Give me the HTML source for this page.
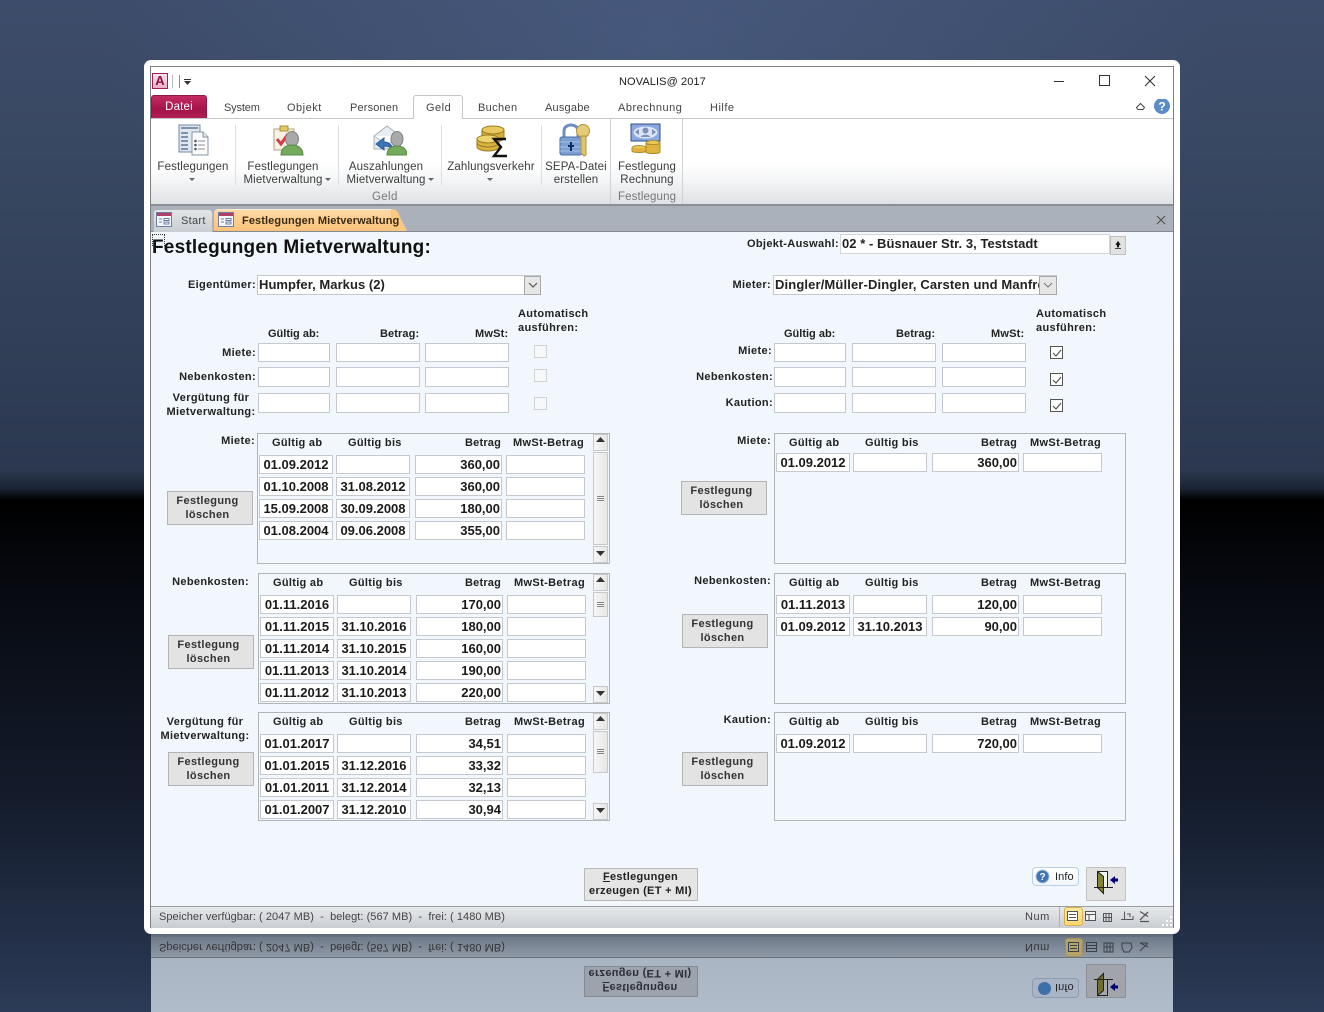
<!DOCTYPE html>
<html><head><meta charset="utf-8"><style>
*{box-sizing:border-box}
html,body{margin:0;padding:0;width:1324px;height:1012px;overflow:hidden;background:#000}
#bg{position:absolute;left:0;top:0;width:1324px;height:1012px;background:radial-gradient(ellipse 560px 330px at 660px 40px,rgba(88,112,160,.35),rgba(88,112,160,0)),linear-gradient(#3d4c6a 0,#37465f 200px,#2b3850 470px,#1c2536 488px,#000 500px,#05070c 560px,#141c2c 800px,#2c3b57 1012px)}
div,span{position:absolute;font-family:"Liberation Sans",sans-serif;white-space:nowrap}
#w{left:144px;top:60px;width:1036px;height:874px;background:#fff;border-radius:7px}
#in{left:150px;top:66px;width:1024px;height:862px;border:1px solid #7f7f7f;background:#fff}
.a{left:0;top:0}
.r{font:11.5px/13px "Liberation Sans",sans-serif;color:#3c3c3c;letter-spacing:.12px;text-align:center}
.m{font:11px "Liberation Sans",sans-serif;color:#444;letter-spacing:.55px}
.s{letter-spacing:.05px}
.l{font:bold 11px "Liberation Sans",sans-serif;color:#222;letter-spacing:.35px;line-height:14px;margin-top:1px}
.lr{text-align:right}
.lc{text-align:center}
.b{background:#fff;border:1px solid #c4c9cf}
.c{font:bold 13px/18px "Liberation Sans",sans-serif;color:#222;padding-left:1px;letter-spacing:.05px}
.v{background:#fff;border:1px solid #c4c9cf;font:bold 13px/17px "Liberation Sans",sans-serif;color:#1a1a1a;text-align:center;height:19px;padding-top:0}
.vr{text-align:right;padding-right:1px}
.box{border:1px solid #b0b5ba;background:#f1f7fd}
.btn{background:#e3e3e3;border:1px solid #b4b4b4;font:bold 11px/14px "Liberation Sans",sans-serif;color:#333;text-align:center;letter-spacing:.35px;width:86px;height:34px;padding-top:2px;padding-right:5px}
.sb{background:linear-gradient(90deg,#f6f6f6,#e6e6e6);border:1px solid #c8c8c8}
.cb{width:13px;height:13px;background:#fff;border:1px solid #555}
.cd{width:13px;height:13px;background:#f6f8f9;border:1px solid #cfd3d6}
.sep{width:1px;background:#dcdfe2}
</style></head><body>
<div id="bg"></div>

<!-- reflection -->
<div style="left:151px;top:934px;width:1022px;height:78px;background:linear-gradient(#5d6778 0,#aab5c3 24px,#b1bccb 78px);overflow:hidden">
<div style="left:0;top:3px;width:1022px;height:21px;background:linear-gradient(#6f7a8a,#8f99a6);border-bottom:1px solid #6c7480"></div>
<div class="m s" style="left:8px;top:7px;color:#333;transform:scaleY(-1)">Speicher verfügbar: ( 2047 MB)&nbsp; -&nbsp; belegt: (567 MB)&nbsp; -&nbsp; frei: ( 1480 MB)</div>
<div class="m" style="left:874px;top:7px;color:#333;transform:scaleY(-1)">Num</div>
<div style="left:914px;top:4px;width:18px;height:19px;background:#b4a36c;border:1px solid #a08f58;border-radius:3px"></div>
<svg class="a" style="position:absolute;left:916px;top:7px" width="90" height="14" fill="none" stroke="#39404a"><rect x="1.5" y="1.5" width="10" height="9"/><path d="M3 4.500h7M3 7.500h7"/><rect x="19.500" y="1.500" width="10" height="9"/><path d="M20 4.500h9M20 7.500h9"/><path d="M37 2h9v9h-9zM40 2v9M43 2v9M37 6h9"/><path d="M55 2h9l1 5-3 4h-5l-2-4z"/><path d="M73 2l8 4M73 10l8-8M73 2h7"/></svg>
<div style="left:433px;top:32px;width:114px;height:31px;background:#9da3ac;border:1px solid #858b94;font:bold 11px/14px 'Liberation Sans',sans-serif;color:#2a2f36;text-align:center;letter-spacing:.3px;transform:scaleY(-1);padding-top:2px;padding-right:2px"><u>F</u>estlegungen<br>erzeugen (ET + MI)</div>
<div style="left:881px;top:44px;width:47px;height:20px;background:#a9b5c6;border:1px solid #8f9cb0;border-radius:4px"></div>
<div class="m" style="left:904px;top:47px;color:#222;letter-spacing:.1px;transform:scaleY(-1)">Info</div>
<div style="left:887px;top:48px;width:13px;height:13px;border-radius:50%;background:#3f6fa8"></div>
<div style="left:935px;top:30px;width:40px;height:34px;background:#a1a5ab;border:1px solid #8d9197"></div>
<svg style="position:absolute;left:942px;top:36px" width="28" height="28"><g transform="translate(0,27) scale(1,-1)"><path d="M4.500 1.500h10v16h-10z" fill="#a5a5ac" stroke="#222"/><path d="M4.500 1.500l6 5v17l-6-6z" fill="#6f6f2b" stroke="#222"/><path d="M1 17.500h19" stroke="#222"/><path d="M17 10l5-4v2.500h3v3h-3V14z" fill="#00006e"/></g></svg>
</div>

<div id="w"></div>
<div id="in"></div>

<!-- quick access -->
<div style="left:152px;top:73px;width:16px;height:16px;background:linear-gradient(#fbe4ee,#e9afc6);border:1px solid #a0204f;font:bold 13px/14px 'Liberation Sans',sans-serif;color:#8c1241;text-align:center">A</div>
<div style="left:172px;top:75px;width:1px;height:13px;background:#bbb"></div>
<div style="left:179px;top:75px;width:1px;height:13px;background:#888"></div>
<div style="left:184px;top:79px;width:7px;height:1px;background:#333"></div>
<svg style="position:absolute;left:184px;top:81px" width="8" height="5"><path d="M0 0h7l-3.500 4z" fill="#333"/></svg>
<div style="left:619px;top:75px;font:11px 'Liberation Sans',sans-serif;color:#1a1a1a;letter-spacing:.1px;line-height:14px">NOVALIS@ 2017</div>
<svg style="position:absolute;left:1050px;top:72px" width="112" height="18" fill="none" stroke="#333" stroke-width="1"><path d="M4 9.500h10"/><rect x="49.500" y="3.500" width="10" height="10"/><path d="M95 4l10 10M105 4l-10 10" stroke-width="1.100"/></svg>

<!-- tabs -->
<div style="left:151px;top:95px;width:56px;height:24px;background:linear-gradient(#c42a63,#a5134b 60%,#b01e55);border-radius:3px 3px 0 0;border:1px solid #8f1743;color:#fff;font:11.5px/23px 'Liberation Sans',sans-serif;text-align:center;letter-spacing:.2px">Datei</div>
<div style="left:151px;top:118px;width:1022px;height:1px;background:#c3c6ca"></div>
<div style="left:413px;top:95px;width:50px;height:25px;background:#fff;border:1px solid #c2c6ca;border-bottom:0;border-radius:3px 3px 0 0"></div>
<div class="m" style="left:224px;top:102px;letter-spacing:-.15px">System</div>
<div class="m" style="left:287px;top:102px;letter-spacing:.5px">Objekt</div>
<div class="m" style="left:350px;top:102px;letter-spacing:.15px">Personen</div>
<div class="m" style="left:426px;top:102px;letter-spacing:.5px">Geld</div>
<div class="m" style="left:478px;top:102px;letter-spacing:.35px">Buchen</div>
<div class="m" style="left:545px;top:102px;letter-spacing:.2px">Ausgabe</div>
<div class="m" style="left:618px;top:102px;letter-spacing:.5px">Abrechnung</div>
<div class="m" style="left:710px;top:102px;letter-spacing:.5px">Hilfe</div>
<svg style="position:absolute;left:1135px;top:99px" width="36" height="16"><path d="M1.500 8.500l4-4 4 4-1.500 2h-5z" fill="none" stroke="#444"/><circle cx="27" cy="7" r="8" fill="#5a8cc6"/><text x="27" y="11.500" font-family="Liberation Sans" font-weight="bold" font-size="12" fill="#fff" text-anchor="middle">?</text></svg>

<!-- ribbon -->
<div style="left:151px;top:119px;width:1022px;height:86px;background:linear-gradient(#fff 0,#fff 45px,#f5f6f7 60px,#dfe1e4 86px)"></div>
<div style="left:151px;top:204px;width:1022px;height:2px;background:#8b8e92"></div>
<div class="sep" style="left:235px;top:125px;height:60px"></div>
<div class="sep" style="left:338px;top:125px;height:60px"></div>
<div class="sep" style="left:441px;top:125px;height:60px"></div>
<div class="sep" style="left:541px;top:125px;height:60px"></div>
<div style="left:610px;top:119px;width:1px;height:85px;background:#cfd2d6"></div>
<div style="left:682px;top:119px;width:1px;height:85px;background:#cfd2d6"></div>

<!-- ribbon icons -->
<svg style="position:absolute;left:178px;top:124px" width="32" height="32"><rect x="1" y="1" width="21" height="27" fill="#dfe6ef" stroke="#7688a0"/><path d="M3 4h17M3 9h7M3 13h7M3 17h7M3 21h7M3 25h7" stroke="#7f93ad" stroke-width="2"/><path d="M14 8h11l5 5v18H14z" fill="#fbfbfb" stroke="#8a95a3"/><path d="M25 8v5h5" fill="#e5e7ea" stroke="#8a95a3"/><path d="M20 17h7M20 21h7M20 25h7" stroke="#89929c"/><circle cx="17.500" cy="17" r="1.300" fill="#556"/><circle cx="17.500" cy="21" r="1.300" fill="#556"/><circle cx="17.500" cy="25" r="1.300" fill="#556"/></svg>
<svg style="position:absolute;left:272px;top:124px" width="32" height="32"><rect x="2" y="5" width="20" height="21" fill="#f6f3e6" stroke="#a9a37f"/><rect x="8" y="2" width="8" height="5" fill="#e5c766" stroke="#a8903e"/><path d="M5 15l4 5 7-10" fill="none" stroke="#d33e45" stroke-width="3"/><ellipse cx="20" cy="15" rx="6.500" ry="7.500" fill="#a9a9a9" stroke="#808080"/><path d="M9 31c0-7 5-10 11-10s11 3 11 10z" fill="#74aa5c" stroke="#5a8a45"/></svg>
<svg style="position:absolute;left:373px;top:124px" width="34" height="32"><path d="M1 12L14 2l13 10v13H1z" fill="#e8edf3" stroke="#a7b0ba"/><path d="M1 12l13 9 13-9" fill="#fff" stroke="#b8c0c8"/><path d="M3 20l8-6v4c4 0 8 2 9 8-2-3-5-4-9-4v4z" fill="#3c74b8" stroke="#2c5a95"/><ellipse cx="24" cy="15" rx="6" ry="7.500" fill="#a9a9a9" stroke="#808080"/><path d="M14 31c0-6 4-9 10-9s10 3 10 9z" fill="#74aa5c" stroke="#5a8a45"/></svg>
<svg style="position:absolute;left:476px;top:124px" width="32" height="34"><ellipse cx="17" cy="6" rx="11" ry="4" fill="#e9c95e" stroke="#9c7d22"/><path d="M6 6v8c0 2 5 4 11 4s11-2 11-4V6c0 2-5 4-11 4S6 8 6 6z" fill="#d6ac3a" stroke="#9c7d22"/><ellipse cx="12" cy="15" rx="11" ry="4" fill="#efd36c" stroke="#9c7d22"/><path d="M1 15v8c0 2 5 4 11 4s11-2 11-4v-8c0 2-5 4-11 4S1 17 1 15z" fill="#d9b23f" stroke="#9c7d22"/><path d="M1 19c0 2 5 4 11 4s11-2 11-4" fill="none" stroke="#9c7d22"/><path d="M30 15H18l7 8-7 9h13" fill="none" stroke="#111" stroke-width="2.400"/></svg>
<svg style="position:absolute;left:559px;top:123px" width="32" height="34"><path d="M5 14V8c0-8 14-8 14 0v6" fill="none" stroke="#6d8fc0" stroke-width="3"/><rect x="1" y="14" width="22" height="18" rx="2" fill="#7c9fd4" stroke="#4a6ca3"/><path d="M1 19h22M1 24h22M1 28h22" stroke="#a5c0e4"/><path d="M12 19v9M9 23h6" stroke="#0d2a66" stroke-width="2"/><circle cx="24" cy="8" r="6.500" fill="#e6cc79" stroke="#b19341"/><path d="M22 13h5v19l-2 1-3-3z" fill="#e0c468" stroke="#b19341"/></svg>
<svg style="position:absolute;left:630px;top:123px" width="32" height="32"><rect x="1" y="1" width="29" height="17" fill="#8aa9e0" stroke="#31507f"/><ellipse cx="15.500" cy="9.500" rx="12" ry="6" fill="#dbe5f6"/><path d="M5 9l4-3v6zM26 9l-4-3v6z" fill="#7a90b5"/><circle cx="15.500" cy="7.500" r="3" fill="#7a90b5"/><path d="M11 14c0-3 9-3 9 0z" fill="#7a90b5"/><ellipse cx="23" cy="20" rx="7" ry="2.500" fill="#eccb5d" stroke="#b18b2b"/><path d="M16 20v9c0 2 14 2 14 0v-9c0 2-14 2-14 0z" fill="#dfb441" stroke="#b18b2b"/><ellipse cx="9" cy="25" rx="7" ry="2.500" fill="#eccb5d" stroke="#b18b2b"/><path d="M2 25v3c0 2 14 2 14 0v-3" fill="#dfb441" stroke="#b18b2b"/></svg>

<!-- ribbon text -->
<div class="r" style="left:151px;width:84px;top:161px">Festlegungen</div>
<div class="r" style="left:238px;width:96px;top:161px;padding-right:6px">Festlegungen<br><span style="position:static">Mietverwaltung</span></div>
<div class="r" style="left:341px;width:96px;top:161px;padding-right:6px">Auszahlungen<br><span style="position:static">Mietverwaltung</span></div>
<div class="r" style="left:443px;width:96px;top:161px">Zahlungsverkehr</div>
<div class="r" style="left:544px;width:64px;top:161px">SEPA-Datei<br><span style="position:static">erstellen</span></div>
<div class="r" style="left:612px;width:70px;top:161px">Festlegung<br><span style="position:static">Rechnung</span></div>
<div class="r" style="left:372px;top:191px;color:#777;letter-spacing:.35px">Geld</div>
<div class="r" style="left:618px;top:191px;color:#777;letter-spacing:.12px">Festlegung</div>
<svg style="position:absolute;left:0;top:0" width="700" height="190"><path d="M189 178h6l-3 3zM325 178h6l-3 3zM428 178h6l-3 3zM487 178h6l-3 3z" fill="#666"/></svg>

<!-- doc tabs -->
<div style="left:151px;top:206px;width:1022px;height:26px;background:#aab1ba;border-bottom:1px solid #858a90"></div>
<div style="left:153px;top:209px;width:60px;height:23px;background:linear-gradient(#e3e6e9,#c9ced3);border:1px solid #aeb3b8;border-bottom:0;border-radius:4px 4px 0 0"></div>
<div style="left:214px;top:209px;width:178px;height:22px;background:linear-gradient(#fdd9a5,#fbc27a);border-radius:4px 0 0 0;border-top:1px solid #f7ecd8"></div>
<svg style="position:absolute;left:391px;top:209px" width="20" height="22"><path d="M0 0C6 0 7 3 9 8L16 22H0z" fill="#fbc881"/></svg>
<svg style="position:absolute;left:156px;top:212px" width="80" height="16" fill="#f6f8fb" stroke="#6d7ea8"><rect x=".5" y=".5" width="15" height="14"/><path d="M1 1h14v3H1z" fill="#b04066" stroke="none"/><path d="M3 7h3M3 10h3M8 6.500h5v2H8zM8 10h5v2H8z"/><rect x="62.500" y=".5" width="15" height="14"/><path d="M63 1h14v3H63z" fill="#b04066" stroke="none"/><path d="M65 7h3M65 10h3M70 6.500h5v2h-5zM70 10h5v2h-5z"/></svg>
<div class="m" style="left:181px;top:215px;color:#444;letter-spacing:.3px">Start</div>
<div style="left:242px;top:215px;font:bold 11px 'Liberation Sans',sans-serif;color:#3a2a10;letter-spacing:.1px">Festlegungen Mietverwaltung</div>
<svg style="position:absolute;left:1156px;top:215px" width="10" height="10"><path d="M1 1l8 8M9 1l-8 8" stroke="#555" stroke-width="1.200"/></svg>

<!-- form -->
<div style="left:151px;top:232px;width:1022px;height:674px;background:#f1f7fd"></div>
<div style="left:152px;top:234px;width:13px;height:12px;border:1px dotted #333;border-bottom:0"></div>
<div style="left:152px;top:237px;font:bold 19px 'Liberation Sans',sans-serif;color:#111;letter-spacing:.2px">Festlegungen Mietverwaltung:</div>

<div class="l lr" style="left:701px;width:138px;top:236px">Objekt-Auswahl:</div>
<div class="b c" style="left:840px;top:234px;width:270px;height:20px;border-color:#d0d5da">02 * - Büsnauer Str. 3, Teststadt</div>
<div style="left:1110px;top:236px;width:16px;height:19px;background:#e2e2e2;border:1px solid #c0c0c0"></div>
<svg style="position:absolute;left:1115px;top:241px" width="6" height="9"><path d="M1 3.500h4L3 .5zM2.300 3h1.400v3H2.300zM0 7.500h6" fill="#111" stroke="#111" stroke-width=".7"/></svg>

<div class="l lr" style="left:160px;width:96px;top:277px">Eigentümer:</div>
<div class="b c" style="left:257px;top:275px;width:284px;height:20px">Humpfer, Markus (2)</div>
<div style="left:524px;top:276px;width:17px;height:19px;background:#e6e6e6;border:1px solid #a8a8a8"></div>
<svg style="position:absolute;left:528px;top:282px" width="10" height="7"><path d="M1 1l4 4 4-4" fill="none" stroke="#555" stroke-width="1.200"/></svg>

<div class="l lr" style="left:680px;width:91px;top:277px">Mieter:</div>
<div class="b c" style="left:773px;top:275px;width:284px;height:20px;overflow:hidden;letter-spacing:.13px">Dingler/Müller-Dingler, Carsten und Manfred</div>
<div style="left:1039px;top:276px;width:18px;height:19px;background:#e6e6e6;border:1px solid #a8a8a8"></div>
<svg style="position:absolute;left:1043px;top:282px" width="10" height="7"><path d="M1 1l4 4 4-4" fill="none" stroke="#777" stroke-width="1"/></svg>

<!-- upper left -->
<div class="l" style="left:518px;top:306px">Automatisch<br>ausführen:</div>
<div class="l" style="left:268px;top:326px;letter-spacing:0">Gültig ab:</div>
<div class="l" style="left:380px;top:326px;letter-spacing:.1px">Betrag:</div>
<div class="l" style="left:475px;top:326px;letter-spacing:.2px">MwSt:</div>
<div class="l lr" style="left:160px;width:96px;top:345px">Miete:</div>
<div class="l lr" style="left:160px;width:96px;top:369px">Nebenkosten:</div>
<div class="l lc" style="left:163px;width:96px;top:390px">Vergütung für<br>Mietverwaltung:</div>
<div class="b" style="left:258px;top:343px;width:72px;height:19px"></div><div class="b" style="left:336px;top:343px;width:84px;height:19px"></div><div class="b" style="left:425px;top:343px;width:84px;height:19px"></div>
<div class="b" style="left:258px;top:367px;width:72px;height:20px"></div><div class="b" style="left:336px;top:367px;width:84px;height:20px"></div><div class="b" style="left:425px;top:367px;width:84px;height:20px"></div>
<div class="b" style="left:258px;top:393px;width:72px;height:20px"></div><div class="b" style="left:336px;top:393px;width:84px;height:20px"></div><div class="b" style="left:425px;top:393px;width:84px;height:20px"></div>
<div class="cd" style="left:534px;top:345px"></div><div class="cd" style="left:534px;top:369px"></div><div class="cd" style="left:534px;top:397px"></div>

<!-- upper right -->
<div class="l" style="left:1036px;top:306px">Automatisch<br>ausführen:</div>
<div class="l" style="left:784px;top:326px;letter-spacing:0">Gültig ab:</div>
<div class="l" style="left:896px;top:326px;letter-spacing:.1px">Betrag:</div>
<div class="l" style="left:991px;top:326px;letter-spacing:.2px">MwSt:</div>
<div class="l lr" style="left:676px;width:96px;top:343px">Miete:</div>
<div class="l lr" style="left:676px;width:97px;top:369px">Nebenkosten:</div>
<div class="l lr" style="left:676px;width:97px;top:395px">Kaution:</div>
<div class="b" style="left:774px;top:343px;width:72px;height:19px"></div><div class="b" style="left:852px;top:343px;width:84px;height:19px"></div><div class="b" style="left:942px;top:343px;width:84px;height:19px"></div>
<div class="b" style="left:774px;top:367px;width:72px;height:20px"></div><div class="b" style="left:852px;top:367px;width:84px;height:20px"></div><div class="b" style="left:942px;top:367px;width:84px;height:20px"></div>
<div class="b" style="left:774px;top:393px;width:72px;height:20px"></div><div class="b" style="left:852px;top:393px;width:84px;height:20px"></div><div class="b" style="left:942px;top:393px;width:84px;height:20px"></div>
<div class="cb" style="left:1050px;top:346px"></div><div class="cb" style="left:1050px;top:373px"></div><div class="cb" style="left:1050px;top:399px"></div>
<svg style="position:absolute;left:1050px;top:346px" width="14" height="67"><path d="M3 7l3 3 5-6M3 34l3 3 5-6M3 60l3 3 5-6" fill="none" stroke="#555" stroke-width="1.200"/></svg>

<!-- left list boxes -->
<div class="box" style="left:257px;top:433px;width:353px;height:131px"></div>
<div class="box" style="left:258px;top:573px;width:352px;height:131px"></div>
<div class="box" style="left:258px;top:712px;width:352px;height:109px"></div>
<!-- right boxes -->
<div class="box" style="left:774px;top:433px;width:352px;height:131px"></div>
<div class="box" style="left:774px;top:573px;width:352px;height:131px"></div>
<div class="box" style="left:774px;top:712px;width:352px;height:109px"></div>

<!-- headers -->
<div class="l" style="left:272px;top:435px;letter-spacing:.3px">Gültig ab</div><div class="l" style="left:348px;top:435px;letter-spacing:.3px">Gültig bis</div><div class="l" style="left:465px;top:435px;letter-spacing:.2px">Betrag</div><div class="l" style="left:513px;top:435px">MwSt-Betrag</div>
<div class="l" style="left:273px;top:575px;letter-spacing:.3px">Gültig ab</div><div class="l" style="left:349px;top:575px;letter-spacing:.3px">Gültig bis</div><div class="l" style="left:465px;top:575px;letter-spacing:.2px">Betrag</div><div class="l" style="left:514px;top:575px">MwSt-Betrag</div>
<div class="l" style="left:273px;top:714px;letter-spacing:.3px">Gültig ab</div><div class="l" style="left:349px;top:714px;letter-spacing:.3px">Gültig bis</div><div class="l" style="left:465px;top:714px;letter-spacing:.2px">Betrag</div><div class="l" style="left:514px;top:714px">MwSt-Betrag</div>
<div class="l" style="left:789px;top:435px;letter-spacing:.3px">Gültig ab</div><div class="l" style="left:865px;top:435px;letter-spacing:.3px">Gültig bis</div><div class="l" style="left:981px;top:435px;letter-spacing:.2px">Betrag</div><div class="l" style="left:1030px;top:435px">MwSt-Betrag</div>
<div class="l" style="left:789px;top:575px;letter-spacing:.3px">Gültig ab</div><div class="l" style="left:865px;top:575px;letter-spacing:.3px">Gültig bis</div><div class="l" style="left:981px;top:575px;letter-spacing:.2px">Betrag</div><div class="l" style="left:1030px;top:575px">MwSt-Betrag</div>
<div class="l" style="left:789px;top:714px;letter-spacing:.3px">Gültig ab</div><div class="l" style="left:865px;top:714px;letter-spacing:.3px">Gültig bis</div><div class="l" style="left:981px;top:714px;letter-spacing:.2px">Betrag</div><div class="l" style="left:1030px;top:714px">MwSt-Betrag</div>

<!-- side labels -->
<div class="l lr" style="left:160px;width:95px;top:433px">Miete:</div>
<div class="l lr" style="left:150px;width:99px;top:574px">Nebenkosten:</div>
<div class="l lc" style="left:157px;width:96px;top:714px">Vergütung für<br>Mietverwaltung:</div>
<div class="l lr" style="left:680px;width:91px;top:433px">Miete:</div>
<div class="l lr" style="left:680px;width:91px;top:573px">Nebenkosten:</div>
<div class="l lr" style="left:680px;width:91px;top:712px">Kaution:</div>

<!-- buttons -->
<div class="btn" style="left:167px;top:491px">Festlegung<br><span style="position:static">löschen</span></div>
<div class="btn" style="left:168px;top:635px">Festlegung<br><span style="position:static">löschen</span></div>
<div class="btn" style="left:168px;top:752px">Festlegung<br><span style="position:static">löschen</span></div>
<div class="btn" style="left:681px;top:481px">Festlegung<br><span style="position:static">löschen</span></div>
<div class="btn" style="left:682px;top:614px">Festlegung<br><span style="position:static">löschen</span></div>
<div class="btn" style="left:682px;top:752px">Festlegung<br><span style="position:static">löschen</span></div>

<!-- L1 rows -->
<div class="v" style="left:259px;top:455px;width:74px">01.09.2012</div><div class="v" style="left:336px;top:455px;width:74px"></div><div class="v vr" style="left:415px;top:455px;width:87px">360,00</div><div class="v" style="left:506px;top:455px;width:79px"></div>
<div class="v" style="left:259px;top:477px;width:74px">01.10.2008</div><div class="v" style="left:336px;top:477px;width:74px">31.08.2012</div><div class="v vr" style="left:415px;top:477px;width:87px">360,00</div><div class="v" style="left:506px;top:477px;width:79px"></div>
<div class="v" style="left:259px;top:499px;width:74px">15.09.2008</div><div class="v" style="left:336px;top:499px;width:74px">30.09.2008</div><div class="v vr" style="left:415px;top:499px;width:87px">180,00</div><div class="v" style="left:506px;top:499px;width:79px"></div>
<div class="v" style="left:259px;top:521px;width:74px">01.08.2004</div><div class="v" style="left:336px;top:521px;width:74px">09.06.2008</div><div class="v vr" style="left:415px;top:521px;width:87px">355,00</div><div class="v" style="left:506px;top:521px;width:79px"></div>
<!-- L2 rows -->
<div class="v" style="left:260px;top:595px;width:74px">01.11.2016</div><div class="v" style="left:337px;top:595px;width:74px"></div><div class="v vr" style="left:416px;top:595px;width:87px">170,00</div><div class="v" style="left:507px;top:595px;width:79px"></div>
<div class="v" style="left:260px;top:617px;width:74px">01.11.2015</div><div class="v" style="left:337px;top:617px;width:74px">31.10.2016</div><div class="v vr" style="left:416px;top:617px;width:87px">180,00</div><div class="v" style="left:507px;top:617px;width:79px"></div>
<div class="v" style="left:260px;top:639px;width:74px">01.11.2014</div><div class="v" style="left:337px;top:639px;width:74px">31.10.2015</div><div class="v vr" style="left:416px;top:639px;width:87px">160,00</div><div class="v" style="left:507px;top:639px;width:79px"></div>
<div class="v" style="left:260px;top:661px;width:74px">01.11.2013</div><div class="v" style="left:337px;top:661px;width:74px">31.10.2014</div><div class="v vr" style="left:416px;top:661px;width:87px">190,00</div><div class="v" style="left:507px;top:661px;width:79px"></div>
<div class="v" style="left:260px;top:683px;width:74px">01.11.2012</div><div class="v" style="left:337px;top:683px;width:74px">31.10.2013</div><div class="v vr" style="left:416px;top:683px;width:87px">220,00</div><div class="v" style="left:507px;top:683px;width:79px"></div>
<!-- L3 rows -->
<div class="v" style="left:260px;top:734px;width:74px">01.01.2017</div><div class="v" style="left:337px;top:734px;width:74px"></div><div class="v vr" style="left:416px;top:734px;width:87px">34,51</div><div class="v" style="left:507px;top:734px;width:79px"></div>
<div class="v" style="left:260px;top:756px;width:74px">01.01.2015</div><div class="v" style="left:337px;top:756px;width:74px">31.12.2016</div><div class="v vr" style="left:416px;top:756px;width:87px">33,32</div><div class="v" style="left:507px;top:756px;width:79px"></div>
<div class="v" style="left:260px;top:778px;width:74px">01.01.2011</div><div class="v" style="left:337px;top:778px;width:74px">31.12.2014</div><div class="v vr" style="left:416px;top:778px;width:87px">32,13</div><div class="v" style="left:507px;top:778px;width:79px"></div>
<div class="v" style="left:260px;top:800px;width:74px">01.01.2007</div><div class="v" style="left:337px;top:800px;width:74px">31.12.2010</div><div class="v vr" style="left:416px;top:800px;width:87px">30,94</div><div class="v" style="left:507px;top:800px;width:79px"></div>
<!-- R rows -->
<div class="v" style="left:776px;top:453px;width:74px">01.09.2012</div><div class="v" style="left:853px;top:453px;width:74px"></div><div class="v vr" style="left:932px;top:453px;width:87px">360,00</div><div class="v" style="left:1023px;top:453px;width:79px"></div>
<div class="v" style="left:776px;top:595px;width:74px">01.11.2013</div><div class="v" style="left:853px;top:595px;width:74px"></div><div class="v vr" style="left:932px;top:595px;width:87px">120,00</div><div class="v" style="left:1023px;top:595px;width:79px"></div>
<div class="v" style="left:776px;top:617px;width:74px">01.09.2012</div><div class="v" style="left:853px;top:617px;width:74px">31.10.2013</div><div class="v vr" style="left:932px;top:617px;width:87px">90,00</div><div class="v" style="left:1023px;top:617px;width:79px"></div>
<div class="v" style="left:776px;top:734px;width:74px">01.09.2012</div><div class="v" style="left:853px;top:734px;width:74px"></div><div class="v vr" style="left:932px;top:734px;width:87px">720,00</div><div class="v" style="left:1023px;top:734px;width:79px"></div>

<!-- scrollbars -->
<div class="sb" style="left:593px;top:434px;width:15px;height:17px"></div>
<div class="sb" style="left:593px;top:452px;width:15px;height:93px"></div>
<div class="sb" style="left:593px;top:546px;width:15px;height:17px"></div>
<div class="sb" style="left:593px;top:574px;width:15px;height:17px"></div>
<div class="sb" style="left:593px;top:592px;width:15px;height:25px"></div>
<div class="sb" style="left:593px;top:686px;width:15px;height:17px"></div>
<div class="sb" style="left:593px;top:713px;width:15px;height:17px"></div>
<div class="sb" style="left:593px;top:731px;width:15px;height:42px"></div>
<div class="sb" style="left:593px;top:803px;width:15px;height:17px"></div>
<svg style="position:absolute;left:593px;top:430px" width="16" height="395"><path d="M3 12l4.500-5 4.500 5zM3 121h9l-4.500 5zM3 152l4.500-5 4.500 5zM3 261h9l-4.500 5zM3 291l4.500-5 4.500 5zM3 378h9l-4.500 5z" fill="#333"/><path d="M4 66.500h7M4 68.500h7M4 70.500h7M4 172.500h7M4 174.500h7M4 176.500h7M4 319.500h7M4 321.500h7M4 323.500h7" stroke="#888"/></svg>

<!-- bottom buttons -->
<div style="left:584px;top:868px;width:114px;height:33px;background:#e5e5e5;border:1px solid #b8b8b8;font:bold 11px/14px 'Liberation Sans',sans-serif;color:#222;text-align:center;letter-spacing:.3px;padding-top:1px;padding-right:1px"><u>F</u>estlegungen<br>erzeugen (ET + MI)</div>
<div style="left:1032px;top:867px;width:47px;height:19px;background:linear-gradient(#fff,#f2f6fb);border:1px solid #bcd0e4;border-radius:4px"></div>
<svg style="position:absolute;left:1035px;top:869px" width="15" height="15"><circle cx="7.500" cy="7.500" r="6.500" fill="#3f74b5" stroke="#a8c4e2"/><text x="7.500" y="11" font-family="Liberation Sans" font-weight="bold" font-size="10" fill="#fff" text-anchor="middle">?</text></svg>
<div class="m" style="left:1055px;top:871px;color:#222;letter-spacing:.1px">Info</div>
<div style="left:1086px;top:867px;width:40px;height:34px;background:#e2e2e2;border:1px solid #c4c4c4"></div>
<svg style="position:absolute;left:1093px;top:870px" width="28" height="28"><path d="M4.500 1.500h10v16h-10z" fill="#f2f4f2" stroke="#222"/><path d="M4.500 1.500l6 5v17l-6-6z" fill="#83842f" stroke="#222"/><path d="M1 17.500h19" stroke="#222"/><path d="M17 10l5-4v2.500h3v3h-3V14z" fill="#00006e"/></svg>

<!-- status bar -->
<div style="left:151px;top:906px;width:1022px;height:22px;background:linear-gradient(#e7e9ec,#c9cdd2);border-top:1px solid #9a9da1"></div>
<div class="m s" style="left:159px;top:911px">Speicher verfügbar: ( 2047 MB)&nbsp; -&nbsp; belegt: (567 MB)&nbsp; -&nbsp; frei: ( 1480 MB)</div>
<div class="m" style="left:1025px;top:911px">Num</div>
<div style="left:1059px;top:907px;width:1px;height:20px;background:#aeb1b5"></div>
<div style="left:1064px;top:907px;width:19px;height:19px;background:linear-gradient(#fde99f,#fbd76e);border:1px solid #d9b04e;border-radius:3px"></div>
<svg style="position:absolute;left:1066px;top:910px" width="92" height="13" fill="none" stroke="#555"><rect x="1.500" y="1.500" width="10" height="9" fill="#fff"/><path d="M3 4.500h7M3 7.500h7"/><rect x="19.500" y="1.500" width="10" height="9" fill="#f3f3f3"/><path d="M20 4.500h9M23 4.500v6"/><path d="M37.500 3.500h8v8h-8zM40 3.500v8M43 3.500v8M37 7.500h9"/><path d="M58.500 1.500v8h8M55 9.500h12V6M61 4h3v3" /><path d="M74 1.500l8 5M74 10l8-8M74 11.500h9" stroke-width="1.300"/></svg>
<svg style="position:absolute;left:1161px;top:915px" width="12" height="12"><path d="M9 1h2v2H9zM5 5h2v2H5zM9 5h2v2H9zM1 9h2v2H1zM5 9h2v2H5zM9 9h2v2H9z" fill="#fff"/></svg>
</body></html>
